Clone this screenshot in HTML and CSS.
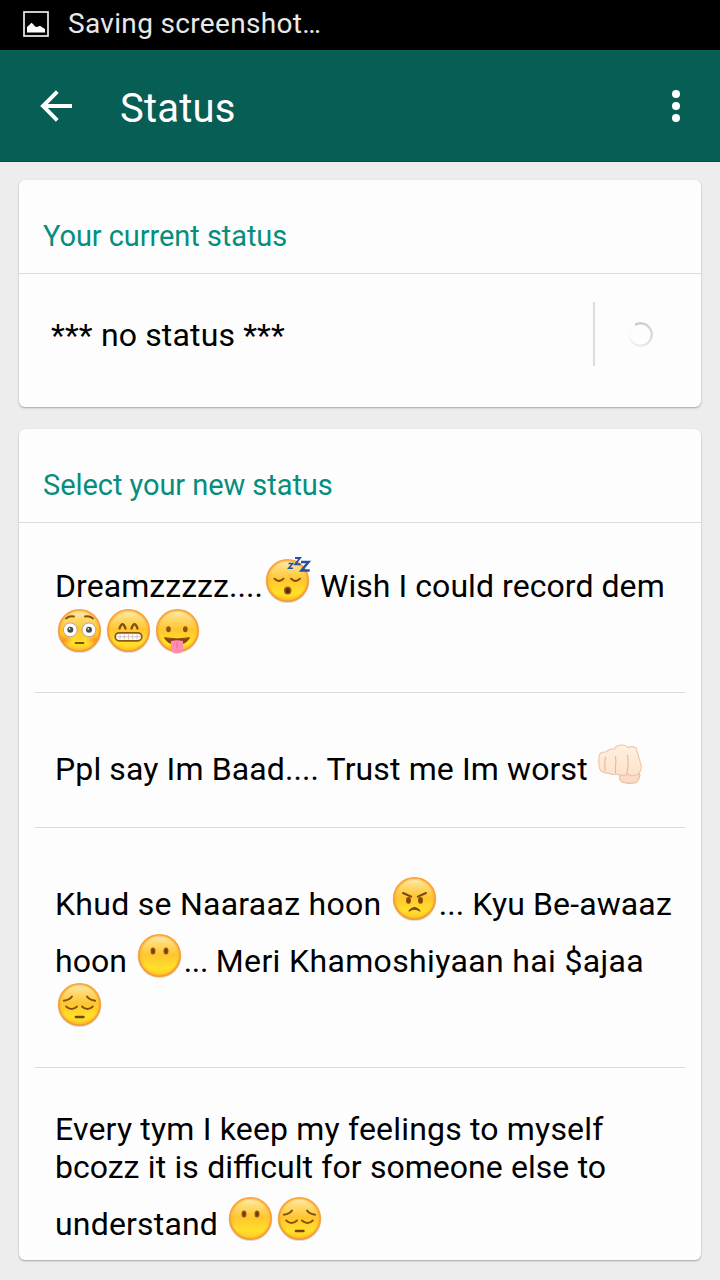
FILE: index.html
```html
<!DOCTYPE html>
<html lang="en">
<head>
<meta charset="utf-8">
<title>Status</title>
<link rel="stylesheet" href="styles.css">
</head>
<body>
<svg class="defs" aria-hidden="true">
  <defs>
    <linearGradient id="skin" x1="0" y1="0" x2="0" y2="1">
      <stop offset="0" stop-color="#ffefb8"/><stop offset=".2" stop-color="#ffda72"/>
      <stop offset=".48" stop-color="#ffc52f"/><stop offset=".8" stop-color="#ffe128"/><stop offset="1" stop-color="#ffc52a"/>
    </linearGradient>
    <linearGradient id="rim" x1="0" y1="0" x2="0" y2="1">
      <stop offset="0" stop-color="#fba53a"/><stop offset="1" stop-color="#f59a2c"/>
    </linearGradient>
    <linearGradient id="fist" x1="0" y1="0" x2="0" y2="1">
      <stop offset="0" stop-color="#fff0e0"/><stop offset="1" stop-color="#fde2cc"/>
    </linearGradient>
    <radialGradient id="blush"><stop offset="0" stop-color="#ff7a22" stop-opacity=".75"/><stop offset="1" stop-color="#ff8a22" stop-opacity="0"/></radialGradient>
    <clipPath id="disc"><circle cx="24.500" cy="24.500" r="20.500"/></clipPath>
    <symbol id="face" viewBox="0 0 49 49">
      <circle cx="24.5" cy="25.2" r="21.900" fill="#000" opacity=".13"/>
      <circle cx="24.5" cy="24.5" r="20.6" fill="url(#skin)" stroke="url(#rim)" stroke-width="1.8"/>
      <circle cx="24.5" cy="24.5" r="19.200" fill="none" stroke="#ffb02e" stroke-width="1.500" opacity=".5"/>
    </symbol>
    <symbol id="sleeping" viewBox="0 0 49 49">
      <use href="#face"/>
      <g fill="none" stroke="#7a4711" stroke-width="1.900" stroke-linecap="round"><path d="M11.500 22.700q4.500 4.500 9 0M28 22.700q4.500 4.500 9 0"/></g>
      <ellipse cx="24.700" cy="34.500" rx="3.800" ry="4.100" fill="#a0601c"/><ellipse cx="24.700" cy="34.800" rx="2.200" ry="2.700" fill="#5c2a0c"/>
      <g fill="none" stroke="#2450a6"><path stroke-width="1.500" d="M25.500 7.500h4.200l-4 4.800h4.300"/><path stroke-width="1.900" d="M32 2h5l-4.800 6.200h5.400"/><path stroke-width="2.500" d="M38 6h7.500l-7 8.400h8.200"/></g>
    </symbol>
    <symbol id="flushed" viewBox="0 0 49 49">
      <use href="#face"/>
      <g clip-path="url(#disc)"><ellipse cx="9" cy="34" rx="9" ry="7" fill="url(#blush)"/><ellipse cx="40" cy="34" rx="9" ry="7" fill="url(#blush)"/></g>
      <g fill="#fff" stroke="#b0aaa0" stroke-width="1"><circle cx="15.300" cy="23.800" r="6.900"/><circle cx="34" cy="23.800" r="6.900"/></g>
      <g fill="#4b4b4b"><circle cx="15.300" cy="23.800" r="3"/><circle cx="34" cy="23.800" r="3"/></g>
      <g fill="#fff"><circle cx="14.600" cy="22.900" r=".8"/><circle cx="33.300" cy="22.900" r=".8"/></g>
      <path d="M11 12.500q3.500-3 8-2M30 10.500q4.500-1 8 2M20.500 37h8" fill="none" stroke="#82500d" stroke-width="1.800" stroke-linecap="round"/>
    </symbol>
    <symbol id="grin" viewBox="0 0 49 49">
      <use href="#face"/>
      <path d="M15.500 22.500q3-8.500 6 0M27.500 22.500q3-8.500 6 0" fill="none" stroke="#81500e" stroke-width="2.300" stroke-linecap="round"/>
      <rect x="11.200" y="26.800" width="26.600" height="8" rx="4" fill="#fff" stroke="#8c5915" stroke-width="1.700"/>
      <path d="M12 30.800h25M16 27.600v6M20.300 27.600v6M24.500 27.600v6M28.700 27.600v6M33 27.600v6" stroke="#cbb9ae" stroke-width=".8"/>
    </symbol>
    <symbol id="tongue" viewBox="0 0 49 49">
      <use href="#face"/>
      <g fill="#8a5510"><ellipse cx="15.500" cy="23.200" rx="2.300" ry="3"/><ellipse cx="32.300" cy="23.200" rx="2.300" ry="3"/></g>
      <path d="M11.500 31.700q12.500 2.500 25 0q-3 6.500-12.500 6.500T11.500 31.700z" fill="#8a430e" stroke="#8a430e"/>
      <path d="M18 35q6-1.500 12 0v7q0 5.500-6 5.500T18 42z" fill="#ff8db3"/><path d="M24 36v6" stroke="#e9689a" stroke-width="1"/>
    </symbol>
    <symbol id="punch" viewBox="0 0 49 49">
      <path d="M24 36q-1.500 6 3 7.500 6 1.500 12 .5 4-1 5-9z" fill="#fbdbc5" stroke="#e3b698" stroke-width="1"/>
      <path d="M3 17q1-4.500 7-4 3-3.500 8-3 3-4 8-4 4 0 6 2.500 5-2 8 .5 2.500 8 5 17 1 6-3 9-3 2-6.500 1.500-2 0-4-1.500-3.500 2-6.500 1-3.500-.2-5-1-3.500 1.500-7.500-1-4 .5-6.500-1.500Q2 31 3 17z" fill="url(#fist)" stroke="#ecc5a9" stroke-width="1.100" stroke-linejoin="round"/>
      <path d="M9.800 18q-1.300 3-.9 8v6M19.300 17q1 5 .2 11v6.500M31.500 16q.8 6 .5 11 0 4-1.500 7.500" fill="none" stroke="#e5b796" stroke-width="1.100"/>
    </symbol>
    <symbol id="angry" viewBox="0 0 49 49">
      <use href="#face"/>
      <path d="M13 19l8.200 3.600M36 19l-8.200 3.600" stroke="#7b480c" stroke-width="2" stroke-linecap="round"/>
      <g fill="#82480f"><ellipse cx="18.500" cy="26.400" rx="2.400" ry="3.300"/><ellipse cx="30.500" cy="26.400" rx="2.400" ry="3.300"/></g>
      <path d="M19 37q5.500-7 11 0q-5.500-3.500-11 0z" fill="#7b480c" stroke="#7b480c" stroke-width="1.200" stroke-linejoin="round"/>
    </symbol>
    <symbol id="nomouth" viewBox="0 0 49 49">
      <use href="#face"/>
      <g fill="#905711"><ellipse cx="18" cy="20" rx="2.500" ry="3.500"/><ellipse cx="31" cy="20" rx="2.500" ry="3.500"/></g>
      <g fill="#693b08"><ellipse cx="18" cy="20" rx="1.200" ry="2"/><ellipse cx="31" cy="20" rx="1.200" ry="2"/></g>
    </symbol>
    <symbol id="pensive" viewBox="0 0 49 49">
      <use href="#face"/>
      <path d="M8.800 20.700q6-.8 8.200-4.200M40.200 20.700q-6-.8-8.200-4.200M11.200 26.500q5.300 5 10.800 0M27 26.500q5.500 5 10.800 0" fill="none" stroke="#81510f" stroke-width="1.900" stroke-linecap="round"/>
      <path d="M20.800 37h7.800" stroke="#744108" stroke-width="2.300" stroke-linecap="round"/>
    </symbol>
  </defs>
</svg>

<div class="system-bar">
  <svg class="picture-icon" viewBox="0 0 26 26"><rect x="1" y="1" width="24" height="24" fill="none" stroke="#eee" stroke-width="1.700"/><path d="M4 21.500v-5.500l2-1.700 2.500-2.500 2 1.800 1.500 2 2 .4 3-1.300 2.500 1.700 2.500 1.500v3.600z" fill="#fff"/></svg>
  <span class="system-text">Saving screenshot…</span>
</div>
<header class="app-bar">
  <svg class="back" viewBox="0 0 34 34"><path d="M33 17H4M18.300 2.700L4 17l14.300 14.300" fill="none" stroke="#fff" stroke-width="3.900"/></svg>
  <h1 class="title">Status</h1>
  <svg class="more" viewBox="0 0 8 32"><circle cx="4" cy="4" r="4"/><circle cx="4" cy="16" r="4"/><circle cx="4" cy="28" r="4"/></svg>
</header>
<main class="content">
  <section class="card current">
    <h2 class="heading">Your current status</h2>
    <div class="current-row">
      <span class="current-text">*** no status ***</span>
      <div class="progress"><div class="spinner"></div></div>
    </div>
  </section>
  <section class="card">
    <h2 class="heading select-heading">Select your new status</h2>
    <ul class="list">
      <li class="item dreams">
        <div class="line track-1">Dreamzzzzz....<svg class="emoji"><use href="#sleeping"/></svg> Wish I could record dem</div>
        <div class="line"><svg class="emoji"><use href="#flushed"/></svg><svg class="emoji"><use href="#grin"/></svg><svg class="emoji"><use href="#tongue"/></svg></div>
      </li>
      <li class="item worst">
        <div class="line track-2">Ppl say Im Baad.... Trust me Im worst <svg class="emoji"><use href="#punch"/></svg></div>
      </li>
      <li class="item khud">
        <div class="line track-4">Khud se Naaraaz hoon <svg class="emoji"><use href="#angry"/></svg><span class="track-2">... Kyu Be-awaaz</span></div>
        <div class="line spaced">hoon <svg class="emoji"><use href="#nomouth"/></svg><span class="tight">... </span><span class="track-5">Meri Khamoshiyaan hai $ajaa</span></div>
        <div class="line"><svg class="emoji"><use href="#pensive"/></svg></div>
      </li>
      <li class="item feelings">
        <div class="line plain track-3">Every tym I keep my feelings to myself</div>
        <div class="line plain words">bcozz it is difficult for someone else to</div>
        <div class="line last track-3">understand <svg class="emoji"><use href="#nomouth"/></svg><svg class="emoji"><use href="#pensive"/></svg></div>
      </li>
    </ul>
  </section>
</main>
</body>
</html>
```
FILE: styles.css
```css
* { box-sizing: border-box; }
body { margin: 0; height: 1280px; overflow: hidden; background: #ededed; color: #000; font-family: Roboto, sans-serif; font-weight: 400; }
h1, h2, ul { margin: 0; padding: 0; font-weight: 400; }
.defs { position: absolute; width: 0; height: 0; }
.system-bar { height: 50px; background: #000; display: flex; align-items: center; padding-left: 23px; gap: 19px; }
.picture-icon { width: 26px; height: 26px; margin-top: -2px; }
.system-text { color: #e8e8e8; font-size: 28px; line-height: 48px; margin-top: -2px; letter-spacing: .33px; }
.app-bar { height: 112px; background: #075e54; display: flex; align-items: center; padding: 0 40px 0 39px; border-bottom: 1px solid #065349; }
.back { width: 34px; height: 34px; }
.title { margin-left: 47px; margin-top: 7px; color: #fff; font-size: 40px; line-height: 48px; flex: 1; letter-spacing: .2px; }
.more { width: 8px; height: 32px; fill: #fff; }
.content { padding: 18px 19px 20px; display: flex; flex-direction: column; gap: 22px; }
.card { height: 831px; background: #fdfdfd; border-radius: 6px; box-shadow: 0 1px 2px rgba(0,0,0,.32); }
.current { height: 227px; }
.heading { height: 94px; padding: 39px 24px 0; border-bottom: 1px solid #dcdcdc; color: #058e7e; font-size: 29px; line-height: 34px; letter-spacing: -.06px; }
.current-row { height: 120px; display: flex; align-items: center; }
.current-text { flex: 1; padding: 2px 0 0 32px; font-size: 32px; letter-spacing: .15px; }
.progress { width: 108px; height: 64px; border-left: 2px solid #dcdcdc; display: flex; align-items: center; padding-left: 33px; }
.spinner { width: 25px; height: 25px; border-radius: 50%; background: conic-gradient(from -30deg, #c9c9c9, #d3d3d3 25%, #e5e5e5 50%, #fafafa 85%, #fdfdfd); mask: radial-gradient(circle, transparent 9.500px, #000 10.500px); }
.list { list-style: none; font-size: 32px; }
.item { margin: 0 16px; padding-left: 20px; border-bottom: 1px solid #dcdcdc; white-space: nowrap; }
.dreams { height: 170px; padding-top: 38px; }
.worst { height: 135px; padding-top: 51px; }
.khud { height: 240px; padding-top: 51px; }
.feelings { padding-top: 42px; border: 0; }
.line { height: 50px; line-height: 50px; }
.spaced { margin-top: 7px; margin-bottom: -1px; }
.plain { height: 38px; line-height: 38px; }
.last { margin-top: 13px; }
.emoji { width: 49px; height: 49px; margin: -10px 0 0; vertical-align: -8px; overflow: visible; }
.track-1 { letter-spacing: .06px; }
.track-2 { letter-spacing: .12px; }
.track-3 { letter-spacing: .18px; }
.track-4 { letter-spacing: .27px; }
.track-5 { letter-spacing: .35px; }
.tight { letter-spacing: -.3px; }
.words { word-spacing: .45px; }
```
